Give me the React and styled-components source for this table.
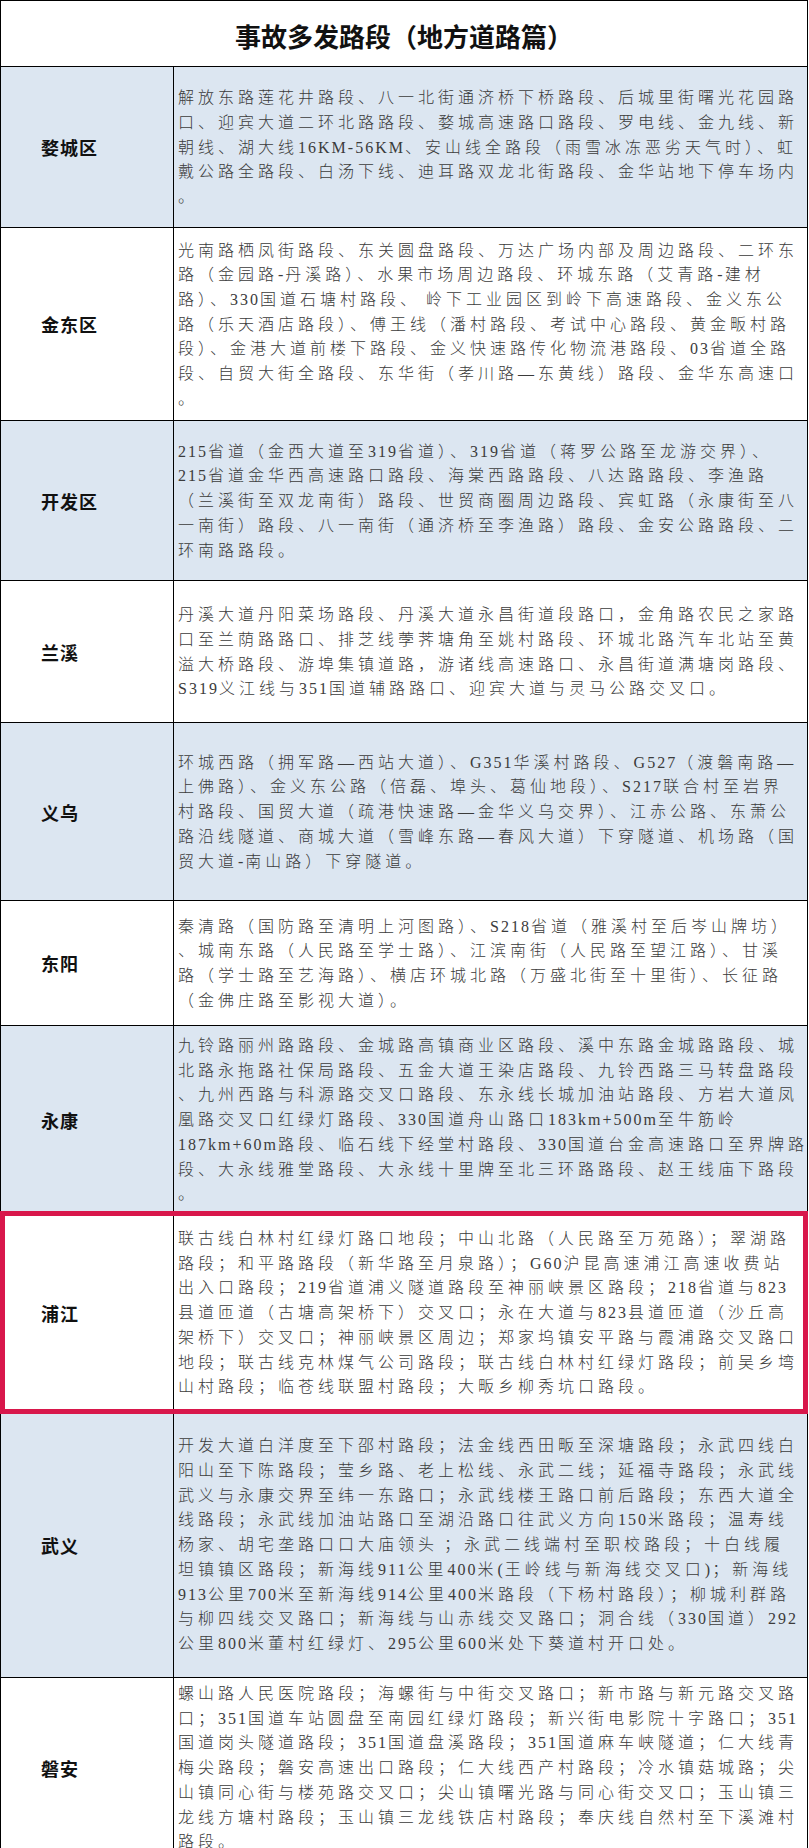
import React from "react";
import styled, { createGlobalStyle } from "styled-components";

// 页面基础样式
const GlobalStyle = createGlobalStyle`
  html, body {
    margin: 0;
    padding: 0;
    background: #fff;
  }
  body {
    font-family: "Liberation Serif", "Noto Sans CJK SC", serif;
  }
`;

const Table = styled.div`
  width: 808px;
  border-top: 1px solid #000;
  border-left: 1px solid #000;
  border-right: 1px solid #000;
  box-sizing: border-box;
`;

const TitleRow = styled.div`
  height: 66px;
  box-sizing: border-box;
  border-bottom: 1px solid #000;
  display: flex;
  align-items: center;
  justify-content: center;
  padding-top: 3px;
  font-family: "Noto Sans CJK SC", sans-serif;
  font-weight: 700;
  font-size: 26px;
  color: #111;
`;

const Row = styled.div`
  position: relative;
  display: grid;
  grid-template-columns: 173px 1fr;
  height: ${(p) => p.$h}px;
  box-sizing: border-box;
  border-bottom: 1px solid #000;
  background: ${(p) => (p.$tint ? "#dce6f1" : "#fff")};

  /* 红框标注 */
  ${(p) =>
    p.$mark &&
    `
    &::after {
      content: "";
      position: absolute;
      top: -3px;
      bottom: -3px;
      left: -1px;
      right: -1px;
      border: 5px solid #d8174b;
      pointer-events: none;
      z-index: 2;
    }
  `}
`;

const NameCell = styled.div`
  display: flex;
  align-items: center;
  padding-left: 40px;
  border-right: 1px solid #000;
  font-family: "Noto Sans CJK SC", serif;
  font-weight: 700;
  font-size: 18px;
  letter-spacing: 1px;
  color: #111;
`;

const TextCell = styled.div`
  display: flex;
  flex-direction: column;
  justify-content: center;
  padding-left: 4px;
  padding-top: 2px;
  overflow: hidden;
`;

const Line = styled.div`
  white-space: pre;
  height: 24.7px;
  line-height: 24.7px;
  font-family: "Liberation Serif", "Noto Sans CJK SC", serif;
  font-weight: 300;
  font-size: 16px;
  letter-spacing: 4px;
  color: #3b3b3b;
`;

const Latin = styled.span`
  font-family: "Liberation Serif", serif;
  font-size: 16px;
  letter-spacing: 2px;
`;

const rows = [
  {
    name: "婺城区",
    tint: true,
    h: 161,
    lines: [
      "解放东路莲花井路段、八一北街通济桥下桥路段、后城里街曙光花园路",
      "口、迎宾大道二环北路路段、婺城高速路口路段、罗电线、金九线、新",
      "朝线、湖大线16KM-56KM、安山线全路段（雨雪冰冻恶劣天气时）、虹",
      "戴公路全路段、白汤下线、迪耳路双龙北街路段、金华站地下停车场内",
      "。",
    ],
  },
  {
    name: "金东区",
    h: 193,
    lines: [
      "光南路栖凤街路段、东关圆盘路段、万达广场内部及周边路段、二环东",
      "路（金园路-丹溪路）、水果市场周边路段、环城东路（艾青路-建材",
      "路）、330国道石塘村路段、 岭下工业园区到岭下高速路段、金义东公",
      "路（乐天酒店路段）、傅王线（潘村路段、考试中心路段、黄金畈村路",
      "段）、金港大道前楼下路段、金义快速路传化物流港路段、03省道全路",
      "段、自贸大街全路段、东华街（孝川路—东黄线）路段、金华东高速口",
      "。",
    ],
  },
  {
    name: "开发区",
    tint: true,
    h: 160,
    lines: [
      "215省道（金西大道至319省道）、319省道（蒋罗公路至龙游交界）、",
      "215省道金华西高速路口路段、海棠西路路段、八达路路段、李渔路",
      "（兰溪街至双龙南街）路段、世贸商圈周边路段、宾虹路（永康街至八",
      "一南街）路段、八一南街（通济桥至李渔路）路段、金安公路路段、二",
      "环南路路段。",
    ],
  },
  {
    name: "兰溪",
    h: 142,
    lines: [
      "丹溪大道丹阳菜场路段、丹溪大道永昌街道段路口，金角路农民之家路",
      "口至兰荫路路口、排芝线荸荠塘角至姚村路段、环城北路汽车北站至黄",
      "溢大桥路段、游埠集镇道路，游诸线高速路口、永昌街道满塘岗路段、",
      "S319义江线与351国道辅路路口、迎宾大道与灵马公路交叉口。",
    ],
  },
  {
    name: "义乌",
    tint: true,
    h: 178,
    lines: [
      "环城西路（拥军路—西站大道）、G351华溪村路段、G527（渡磐南路—",
      "上佛路）、金义东公路（倍磊、埠头、葛仙地段）、S217联合村至岩界",
      "村路段、国贸大道（疏港快速路—金华义乌交界）、江赤公路、东萧公",
      "路沿线隧道、商城大道（雪峰东路—春风大道）下穿隧道、机场路（国",
      "贸大道-南山路）下穿隧道。",
    ],
  },
  {
    name: "东阳",
    h: 125,
    lines: [
      "秦清路（国防路至清明上河图路）、S218省道（雅溪村至后岑山牌坊）",
      "、城南东路（人民路至学士路）、江滨南街（人民路至望江路）、甘溪",
      "路（学士路至艺海路）、横店环城北路（万盛北街至十里街）、长征路",
      "（金佛庄路至影视大道）。",
    ],
  },
  {
    name: "永康",
    tint: true,
    h: 188,
    lines: [
      "九铃路丽州路路段、金城路高镇商业区路段、溪中东路金城路路段、城",
      "北路永拖路社保局路段、五金大道王染店路段、九铃西路三马转盘路段",
      "、九州西路与科源路交叉口路段、东永线长城加油站路段、方岩大道凤",
      "凰路交叉口红绿灯路段、330国道舟山路口183km+500m至牛筋岭",
      "187km+60m路段、临石线下经堂村路段、330国道台金高速路口至界牌路",
      "段、大永线雅堂路段、大永线十里牌至北三环路路段、赵王线庙下路段",
      "。",
    ],
  },
  {
    name: "浦江",
    h: 198,
    mark: true,
    lines: [
      "联古线白林村红绿灯路口地段；中山北路（人民路至万苑路）；翠湖路",
      "路段；和平路路段（新华路至月泉路）；G60沪昆高速浦江高速收费站",
      "出入口路段；219省道浦义隧道路段至神丽峡景区路段；218省道与823",
      "县道匝道（古塘高架桥下）交叉口；永在大道与823县道匝道（沙丘高",
      "架桥下）交叉口；神丽峡景区周边；郑家坞镇安平路与霞浦路交叉路口",
      "地段；联古线克林煤气公司路段；联古线白林村红绿灯路段；前吴乡塆",
      "山村路段；临苍线联盟村路段；大畈乡柳秀坑口路段。",
    ],
  },
  {
    name: "武义",
    tint: true,
    h: 266,
    lines: [
      "开发大道白洋度至下邵村路段；法金线西田畈至深塘路段；永武四线白",
      "阳山至下陈路段；莹乡路、老上松线、永武二线；延福寺路段；永武线",
      "武义与永康交界至纬一东路口；永武线楼王路口前后路段；东西大道全",
      "线路段；永武线加油站路口至湖沿路口往武义方向150米路段；温寿线",
      "杨家、胡宅垄路口口大庙领头 ；永武二线端村至职校路段；十白线履",
      "坦镇镇区路段；新海线911公里400米(王岭线与新海线交叉口)；新海线",
      "913公里700米至新海线914公里400米路段（下杨村路段）；柳城利群路",
      "与柳四线交叉路口；新海线与山赤线交叉路口；洞合线（330国道）292",
      "公里800米董村红绿灯、295公里600米处下葵道村开口处。",
    ],
  },
  {
    name: "磐安",
    h: 180,
    lines: [
      "螺山路人民医院路段；海螺街与中街交叉路口；新市路与新元路交叉路",
      "口；351国道车站圆盘至南园红绿灯路段；新兴街电影院十字路口；351",
      "国道岗头隧道路段；351国道盘溪路段；351国道麻车峡隧道；仁大线青",
      "梅尖路段；磐安高速出口路段；仁大线西产村路段；冷水镇菇城路；尖",
      "山镇同心街与楼苑路交叉口；尖山镇曙光路与同心街交叉口；玉山镇三",
      "龙线方塘村路段；玉山镇三龙线铁店村路段；奉庆线自然村至下溪滩村",
      "路段。",
    ],
  },
];

// 把半角字符单独包起来，间距窄一点
function renderLine(text) {
  return text.split(/([ -~]+)/).map((part, i) =>
    /^[ -~]+$/.test(part) ? <Latin key={i}>{part}</Latin> : part
  );
}

export default function App() {
  return (
    <>
      <GlobalStyle />
      <Table>
        <TitleRow>事故多发路段（地方道路篇）</TitleRow>
        {rows.map((row) => (
          <Row key={row.name} $h={row.h} $tint={row.tint} $mark={row.mark}>
            <NameCell>{row.name}</NameCell>
            <TextCell>
              {row.lines.map((line, i) => (
                <Line key={i}>{renderLine(line)}</Line>
              ))}
            </TextCell>
          </Row>
        ))}
      </Table>
    </>
  );
}
